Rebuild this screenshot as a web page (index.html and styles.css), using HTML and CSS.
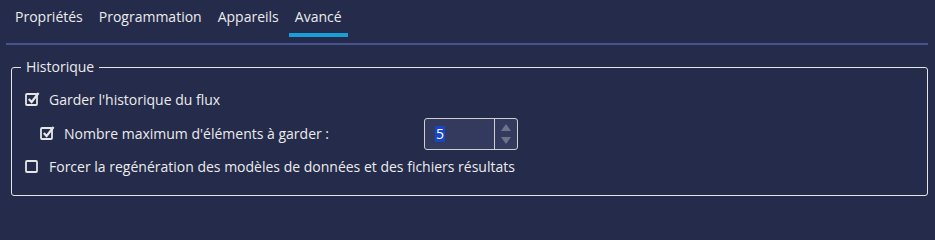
FILE: index.html
```html
<!DOCTYPE html>
<html lang="fr">
<head>
<meta charset="utf-8">
<link rel="stylesheet" href="styles.css">
</head>
<body>
<div class="page">
  <div class="tabs">
    <div class="tab">Propriétés</div>
    <div class="tab">Programmation</div>
    <div class="tab">Appareils</div>
    <div class="tab active">Avancé</div>
  </div>
  <div class="divider"></div>
  <fieldset class="group">
    <legend>Historique</legend>
    <div class="row first">
      <span class="cb"><svg viewBox="0 0 16 16" width="16" height="16"><rect x="1" y="4" width="11" height="11" rx="1" fill="none" stroke="#e6e6e6" stroke-width="1.8"/><path d="M3.8 9 L6.6 12 L13.6 3" fill="none" stroke="#e6e6e6" stroke-width="2.2"/></svg></span>
      <span class="label">Garder l'historique du flux</span>
    </div>
    <div class="row sub">
      <span class="cb"><svg viewBox="0 0 16 16" width="16" height="16"><rect x="1" y="4" width="11" height="11" rx="1" fill="none" stroke="#e6e6e6" stroke-width="1.8"/><path d="M3.8 9 L6.6 12 L13.6 3" fill="none" stroke="#e6e6e6" stroke-width="2.2"/></svg></span>
      <span class="label sublabel">Nombre maximum d'éléments à garder :</span>
      <div class="spin">
        <div class="spin-value"><span class="sel">5</span></div>
        <div class="spin-btns">
          <span class="arrow up"></span>
          <span class="arrow down"></span>
        </div>
      </div>
    </div>
    <div class="row">
      <span class="cb"><svg viewBox="0 0 16 16" width="16" height="16"><rect x="1" y="4" width="11" height="11" rx="1" fill="none" stroke="#e6e6e6" stroke-width="1.8"/></svg></span>
      <span class="label">Forcer la regénération des modèles de données et des fichiers résultats</span>
    </div>
  </fieldset>
</div>
</body>
</html>
```
FILE: styles.css
```css
html, body {
  margin: 0;
  padding: 0;
  background: #242b4b;
  width: 935px;
  height: 215px;
  overflow: hidden;
}
.page {
  font-family: "Open Sans", "Noto Sans", sans-serif;
  font-size: 14px;
  color: #ececec;
  padding: 0 7px 0 6px;
}
.tabs {
  display: flex;
  gap: 4px;
  padding-left: 3px;
  height: 37px;
}
.tab {
  padding: 7px 6px 0 6px;
  line-height: 20px;
  box-sizing: border-box;
  height: 37px;
}
.tab.active {
  border-bottom: 4px solid #189fd8;
}
.divider {
  margin-top: 6px;
  height: 2px;
  background: #46538c;
}
.group {
  margin: 12px 0 0 5px;
  border: 1px solid #e4e4e4;
  border-radius: 3px;
  padding: 13px 0 18px 13px;
  min-width: 0;
}
.group legend {
  padding: 0 5px;
  margin-left: -4px;
  line-height: 20px;
}
.row {
  display: flex;
  align-items: center;
  height: 20px;
}
.row.sub {
  padding-left: 15px;
  height: 32px;
  margin: 8px 0 7px 0;
}
.cb {
  width: 16px;
  height: 16px;
  display: inline-flex;
  margin: -4px 8px 0 0;
}
.cb svg { display: block; }
.label {
  line-height: 20px;
  white-space: nowrap;
}
.sublabel {
  width: 360px;
}
.spin {
  display: flex;
  width: 94px;
  height: 32px;
  border: 1px solid #cfcfcf;
  border-radius: 3px;
  background: #343a5e;
  box-sizing: border-box;
}
.spin-value {
  flex: 1;
  display: flex;
  align-items: center;
  padding-left: 10px;
  border-right: 1px solid #cfcfcf;
}
.sel {
  background: #1546c4;
  color: #ffffff;
  padding: 0 1px;
  line-height: 16px;
}
.spin-btns {
  width: 22px;
  display: flex;
  flex-direction: column;
  align-items: center;
  justify-content: center;
  gap: 6px;
}
.arrow {
  width: 0;
  height: 0;
  border-left: 5px solid transparent;
  border-right: 5px solid transparent;
}
.arrow.up { border-bottom: 7px solid #6f7388; }
.arrow.down { border-top: 7px solid #6f7388; }
```
